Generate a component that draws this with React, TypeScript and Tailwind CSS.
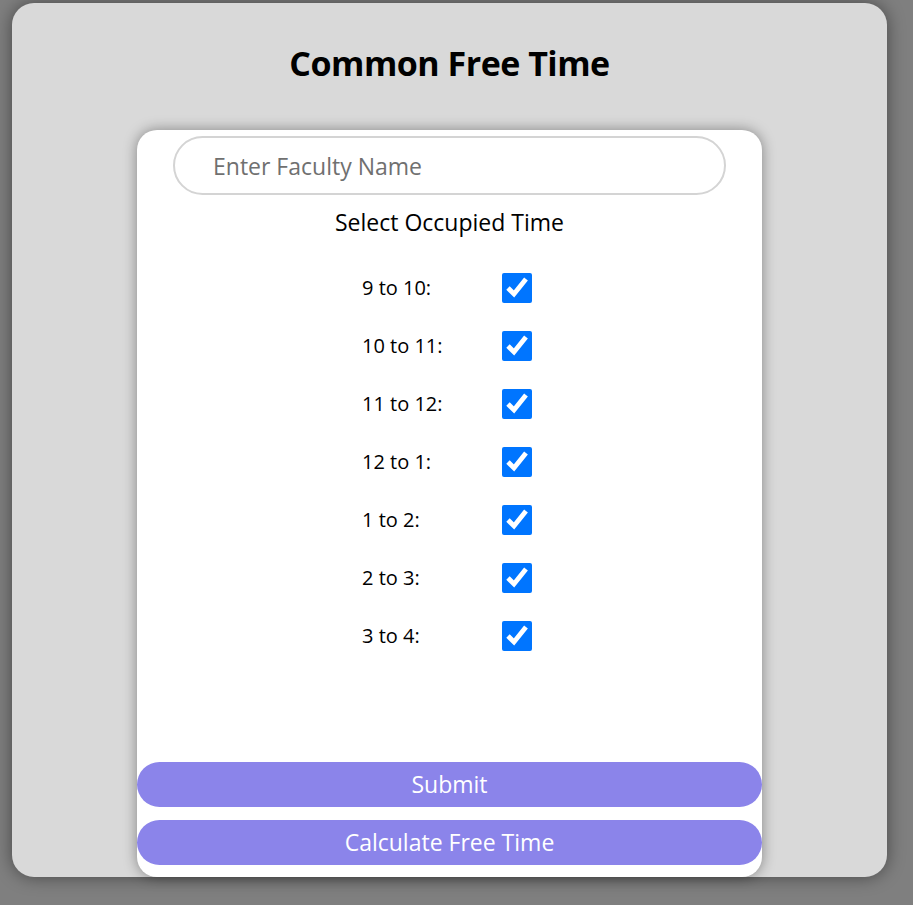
import { useState } from "react";

const slots = [
  "9 to 10:",
  "10 to 11:",
  "11 to 12:",
  "12 to 1:",
  "1 to 2:",
  "2 to 3:",
  "3 to 4:",
];

export default function App() {
  const [name, setName] = useState("");
  const [checked, setChecked] = useState<boolean[]>(slots.map(() => true));

  return (
    <div className="min-h-[905px] bg-[#7f7f7f] pt-[3px] pl-[12px] font-['Open_Sans',sans-serif]">
      <div className="w-[875px] h-[874px] rounded-[22px] bg-[#d9d9d9] shadow-[0_0_18px_rgba(0,0,0,0.45)] flex flex-col items-center">
        <h1 className="mt-[40px] text-[34px] leading-[40px] font-bold text-black tracking-[-0.5px]">
          Common Free Time
        </h1>

        <div className="mt-[47px] w-[625px] h-[748px] rounded-[20px] bg-white shadow-[0_0_14px_rgba(0,0,0,0.4)] flex flex-col items-center">
          <input
            type="text"
            value={name}
            onChange={(e) => setName(e.target.value)}
            placeholder="Enter Faculty Name"
            className="mt-[6px] w-[553px] h-[59px] rounded-full border-2 border-[#d4d4d4] px-[38px] text-[23px] text-black placeholder:text-[#707070] outline-none"
          />
          <p className="mt-[12px] text-[23px] leading-[30px] text-black">
            Select Occupied Time
          </p>

          <div className="mt-[36px] grid grid-cols-[140px_30px] gap-y-[28px] mr-[5px]">
            {slots.map((slot, i) => (
              <label key={slot} className="contents">
                <span className="h-[30px] flex items-center text-[20px] text-black">
                  {slot}
                </span>
                <input
                  type="checkbox"
                  checked={checked[i]}
                  onChange={(e) =>
                    setChecked(checked.map((c, j) => (j === i ? e.target.checked : c)))
                  }
                  className="w-[30px] h-[30px] m-0 accent-[#0075ff]"
                />
              </label>
            ))}
          </div>

          <div className="mt-auto mb-[12px] w-full flex flex-col gap-[13px]">
            <button className="h-[45px] w-full rounded-full bg-[#8b84ea] text-white text-[23px]">
              Submit
            </button>
            <button className="h-[45px] w-full rounded-full bg-[#8b84ea] text-white text-[23px]">
              Calculate Free Time
            </button>
          </div>
        </div>
      </div>
    </div>
  );
}
